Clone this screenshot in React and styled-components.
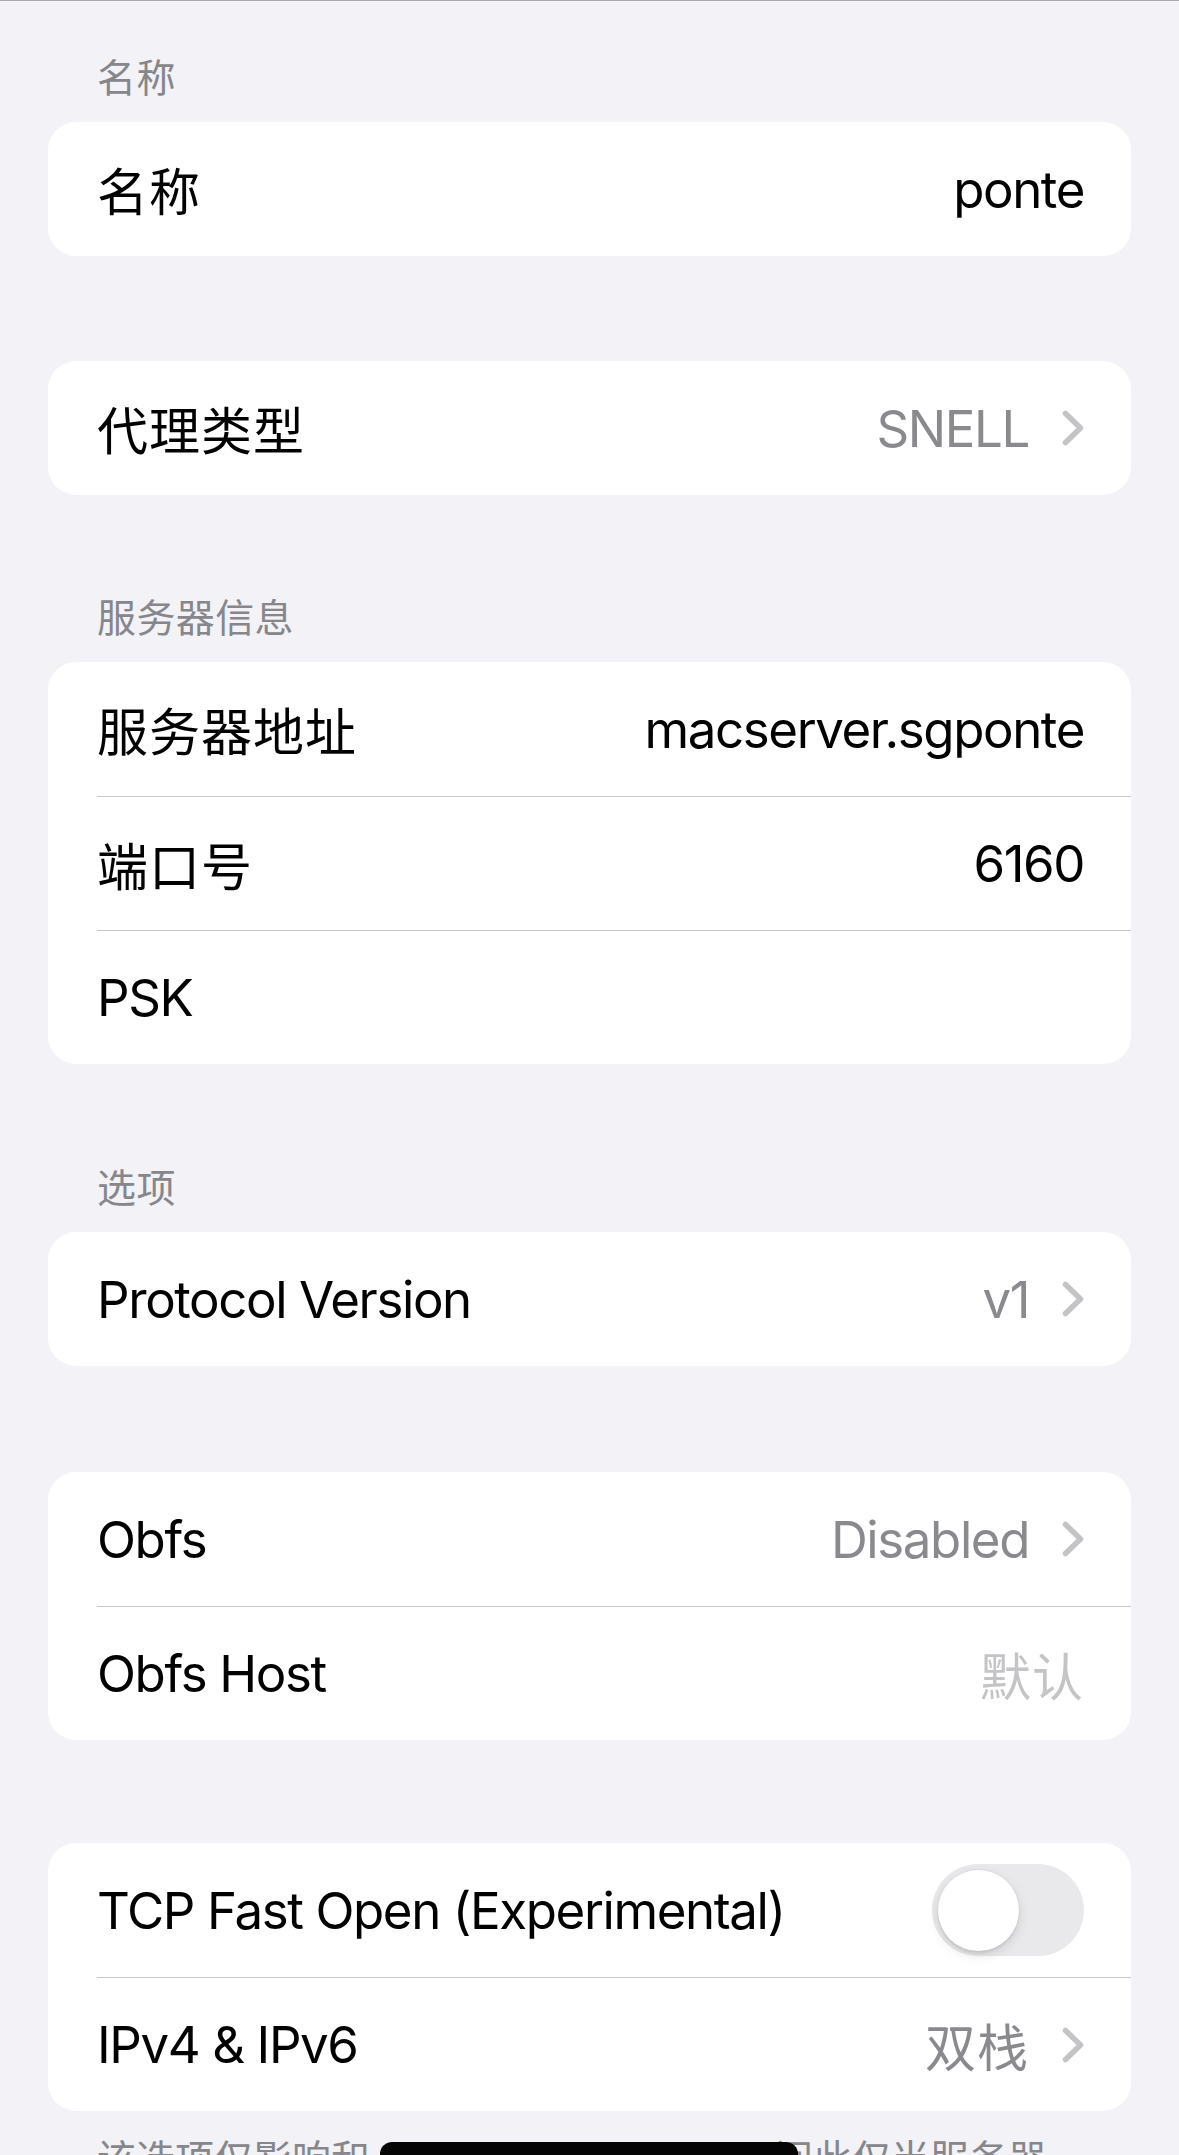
import React from 'react';
import styled, { createGlobalStyle } from 'styled-components';

const GlobalStyle = createGlobalStyle`
  html, body {
    margin: 0;
    padding: 0;
    background: #f2f2f7;
  }
  body {
    font-family: "Inter", "Noto Sans CJK SC", sans-serif;
    -webkit-font-smoothing: antialiased;
  }
`;

const hasCJK = (text) => /[\u3400-\u9fff]/.test(text || '');

const Page = styled.div`
  width: 1179px;
  min-height: 2155px;
  box-sizing: border-box;
  background: #f2f2f7;
  border-top: 1px solid #a7a7ac;
  padding: 53px 48px 0;
  overflow: hidden;
`;

const Section = styled.section`
  margin-top: ${(p) => p.$gap || 0}px;
`;

const SectionHeader = styled.div`
  font-size: 39px;
  line-height: 47px;
  color: #86868b;
  padding-left: 49px;
  margin-bottom: 21px;
  letter-spacing: 0.4px;
`;

const Card = styled.div`
  background: #ffffff;
  border-radius: 28px;
  overflow: hidden;
`;

const Row = styled.div`
  display: flex;
  padding-left: 49px;
`;

const RowInner = styled.div`
  flex: 1;
  height: 134px;
  box-sizing: border-box;
  display: flex;
  align-items: center;
  justify-content: space-between;
  padding-right: 47px;
  border-top: ${(p) => (p.$first ? 'none' : '1px solid #c8c8cc')};
`;

const Label = styled.span`
  font-size: 51px;
  color: #000;
  letter-spacing: ${(p) => (p.$cjk ? '1px' : '-1.4px')};
  white-space: nowrap;
`;

const valueColors = {
  primary: '#000000',
  secondary: '#8a8a8e',
  placeholder: '#c4c4c7',
};

const Value = styled.span`
  font-size: 51px;
  letter-spacing: ${(p) => (p.$cjk ? '1px' : '-1.4px')};
  color: ${(p) => valueColors[p.$tone || 'primary']};
  white-space: nowrap;
`;

const Trailing = styled.div`
  display: flex;
  align-items: center;
  gap: 33px;
`;

const ChevronIcon = styled.svg`
  display: block;
  width: 22px;
  height: 36px;
`;

const Chevron = () => (
  <ChevronIcon viewBox="0 0 22 36">
    <polyline
      points="3.5,3.5 18.5,18 3.5,32.5"
      fill="none"
      stroke="#c4c4c7"
      strokeWidth="5.5"
      strokeLinecap="round"
      strokeLinejoin="round"
    />
  </ChevronIcon>
);

const SwitchTrack = styled.div`
  width: 152px;
  height: 92px;
  border-radius: 46px;
  background: #e9e9eb;
  display: flex;
  align-items: center;
  padding: 0 6px;
  box-sizing: border-box;
`;

const SwitchKnob = styled.div`
  width: 81px;
  height: 81px;
  border-radius: 50%;
  background: #ffffff;
  box-shadow: 0 4px 12px rgba(0, 0, 0, 0.12), 0 3px 2px rgba(0, 0, 0, 0.05),
    0 0 0 1px rgba(0, 0, 0, 0.03);
`;

const Footer = styled.div`
  display: flex;
  align-items: flex-start;
  margin-top: 24px;
  padding-left: 49px;
  font-size: 39px;
  line-height: 47px;
  color: #86868b;
  white-space: nowrap;
`;

const Redaction = styled.span`
  display: inline-block;
  position: relative;
  z-index: 1;
  width: 418px;
  height: 50px;
  margin: 7px -24px 0 10px;
  background: #050505;
  border-radius: 12px;
`;

const SettingRow = ({ first, label, value, tone, chevron, children }) => (
  <Row>
    <RowInner $first={first}>
      <Label $cjk={hasCJK(label)}>{label}</Label>
      {children || (
        <Trailing>
          {value && (
            <Value $tone={tone} $cjk={hasCJK(value)}>
              {value}
            </Value>
          )}
          {chevron && <Chevron />}
        </Trailing>
      )}
    </RowInner>
  </Row>
);

export default function App() {
  return (
    <>
      <GlobalStyle />
      <Page>
        <Section>
          <SectionHeader>名称</SectionHeader>
          <Card>
            <SettingRow first label="名称" value="ponte" />
          </Card>
        </Section>

        <Section $gap={105}>
          <Card>
            <SettingRow first label="代理类型" value="SNELL" tone="secondary" chevron />
          </Card>
        </Section>

        <Section $gap={99}>
          <SectionHeader>服务器信息</SectionHeader>
          <Card>
            <SettingRow first label="服务器地址" value="macserver.sgponte" />
            <SettingRow label="端口号" value="6160" />
            <SettingRow label="PSK" />
          </Card>
        </Section>

        <Section $gap={100}>
          <SectionHeader>选项</SectionHeader>
          <Card>
            <SettingRow first label="Protocol Version" value="v1" tone="secondary" chevron />
          </Card>
        </Section>

        <Section $gap={106}>
          <Card>
            <SettingRow first label="Obfs" value="Disabled" tone="secondary" chevron />
            <SettingRow label="Obfs Host" value="默认" tone="placeholder" />
          </Card>
        </Section>

        <Section $gap={103}>
          <Card>
            <SettingRow first label="TCP Fast Open (Experimental)">
              <SwitchTrack>
                <SwitchKnob />
              </SwitchTrack>
            </SettingRow>
            <SettingRow label="IPv4 & IPv6" value="双栈" tone="secondary" chevron />
          </Card>
          <Footer>
            <span>该选项仅影响和</span>
            <Redaction />
            <span>间此仅当服务器</span>
          </Footer>
        </Section>
      </Page>
    </>
  );
}
